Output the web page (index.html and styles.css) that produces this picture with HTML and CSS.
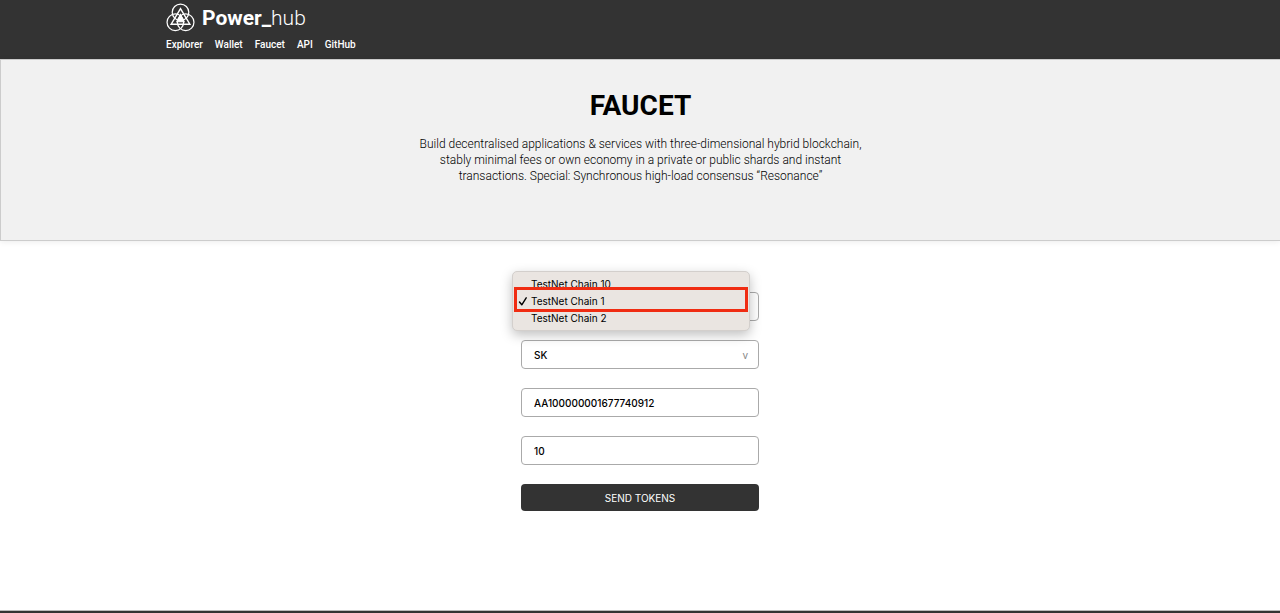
FILE: index.html
```html
<!DOCTYPE html>
<html lang="en">
<head>
  <meta charset="utf-8">
  <meta name="viewport" content="width=device-width, initial-scale=1">
  <title>Power_hub Faucet</title>
  <link rel="stylesheet" href="styles.css">
</head>
<body>
  <header class="header">
    <div class="header-inner">
      <a class="brand" href="#">
        <svg class="brand-logo" viewBox="0 0 28 28" fill="none" stroke="currentColor" aria-hidden="true">
          <circle cx="14" cy="9" r="8" stroke-width="1.2"/>
          <circle cx="9" cy="18.6" r="8" stroke-width="1.2"/>
          <circle cx="19" cy="18.6" r="8" stroke-width="1.2"/>
          <path d="M14 5.5L23 20.5H5Z" stroke-width="1.4"/>
          <path d="M14 11L17.6 18.2H10.4Z" fill="currentColor" stroke-width="1"/>
        </svg>
        <span class="brand-name"><b>Power_</b>hub</span>
      </a>
      <nav class="nav">
        <a href="#">Explorer</a>
        <a href="#">Wallet</a>
        <a href="#">Faucet</a>
        <a href="#">API</a>
        <a href="#">GitHub</a>
      </nav>
    </div>
  </header>

  <section class="hero">
    <h1 class="hero-title">FAUCET</h1>
    <p class="hero-text">Build decentralised applications &amp; services with three-dimensional hybrid blockchain, stably minimal fees or own economy in a private or public shards and instant transactions. Special: Synchronous high-load consensus “Resonance”</p>
  </section>

  <main class="main">
    <form class="form">
      <div class="field">
        <select class="control" aria-label="Chain">
          <option>TestNet Chain 10</option>
          <option selected>TestNet Chain 1</option>
          <option>TestNet Chain 2</option>
        </select>
        <ul class="menu" role="listbox" aria-label="Chain">
          <li class="menu-item" role="option" aria-selected="false">TestNet Chain 10</li>
          <li class="menu-item menu-item-selected" role="option" aria-selected="true">
            <svg class="check" viewBox="0 0 10 10" fill="none" stroke="currentColor" stroke-width="1.4" stroke-linecap="round" stroke-linejoin="round" aria-hidden="true"><path d="M1.5 6L3.8 8.8L8.2 1.8"/></svg>
            TestNet Chain 1
          </li>
          <li class="menu-item" role="option" aria-selected="false">TestNet Chain 2</li>
        </ul>
      </div>
      <div class="field">
        <select class="control" aria-label="Token">
          <option>SK</option>
        </select>
        <span class="arrow" aria-hidden="true">v</span>
      </div>
      <input class="control" type="text" aria-label="Wallet address" value="AA100000001677740912">
      <input class="control" type="text" aria-label="Amount" value="10">
      <button class="submit" type="button">SEND TOKENS</button>
    </form>
  </main>

  <footer class="footer"></footer>
</body>
</html>
```
FILE: styles.css
```css
* {
  box-sizing: border-box;
}

body {
  display: flex;
  flex-direction: column;
  min-height: 100vh;
  margin: 0;
  background: #fff;
  color: #000;
  font-family: Roboto, "Liberation Sans", sans-serif;
}

.header {
  padding: 3px 24px 6px;
  background: #333;
}

.header-inner {
  max-width: 948px;
  margin: 0 auto;
}

.brand {
  display: flex;
  align-items: center;
  gap: 7px;
  width: fit-content;
  height: 29px;
  color: #fff;
  text-decoration: none;
}

.brand-logo {
  width: 29px;
  height: 29px;
}

.brand-name {
  font-size: 21px;
  font-weight: 300;
  line-height: 28px;
}

.brand-name b {
  font-weight: 700;
}

.nav {
  display: flex;
  gap: 12px;
  padding-top: 5px;
}

.nav a {
  color: #fff;
  font-size: 10px;
  font-weight: 500;
  line-height: 16px;
  text-decoration: none;
}

.hero {
  padding: 30px 24px 56px;
  border: 1px solid #ccc;
  border-right: 0;
  background: #f1f1f1;
  box-shadow: 0 1px 6px rgba(0, 0, 0, 0.08);
  text-align: center;
}

.hero-title {
  margin: 0 0 14px;
  font-size: 28px;
  font-weight: 700;
  line-height: 32px;
}

.hero-text {
  max-width: 444px;
  margin: 0 auto;
  color: #000;
  font-size: 12px;
  font-weight: 300;
  line-height: 16px;
}

.main {
  flex: 1;
  padding: 51px 24px 88px;
}

.form {
  display: flex;
  flex-direction: column;
  gap: 19px;
  width: 100%;
  max-width: 238px;
  margin: 0 auto;
}

.field {
  position: relative;
  display: flex;
}

.control {
  width: 100%;
  height: 29px;
  padding: 0 12px;
  border: 1px solid #aaa;
  border-radius: 4px;
  appearance: none;
  background: #fff;
  color: #000;
  font-family: Inter, sans-serif;
  font-size: 10px;
  font-weight: 500;
}

.arrow {
  position: absolute;
  top: 7px;
  right: 11px;
  color: #888;
  font-family: Inter, sans-serif;
  font-size: 10px;
  line-height: 16px;
  pointer-events: none;
}

.menu {
  position: absolute;
  z-index: 1;
  top: -21px;
  left: -9px;
  width: 100%;
  margin: 0;
  padding: 4px 0 3px;
  border: 1px solid #d3cfcc;
  border-radius: 5px;
  background: #eae5e1;
  box-shadow: 0 4px 12px rgba(0, 0, 0, 0.25);
  font-family: Inter, sans-serif;
  font-size: 10px;
  line-height: 17px;
  list-style: none;
}

.menu-item {
  padding-left: 18px;
}

.menu-item-selected {
  position: relative;
  z-index: 1;
}

.menu-item-selected::before {
  position: absolute;
  z-index: -1;
  inset: -6px 1px -2px 1px;
  border: 3px solid #f02c12;
  background: #eae5e1;
  content: "";
}

.check {
  position: absolute;
  top: 3px;
  left: 5px;
  width: 10px;
  height: 10px;
}

.submit {
  height: 27px;
  padding: 0 12px;
  border: 0;
  border-radius: 4px;
  background: #333;
  color: #fff;
  font-family: Inter, sans-serif;
  font-size: 10px;
}

.footer {
  height: 3px;
  border-top: 1px solid #bbb;
  background: #333;
}
```
